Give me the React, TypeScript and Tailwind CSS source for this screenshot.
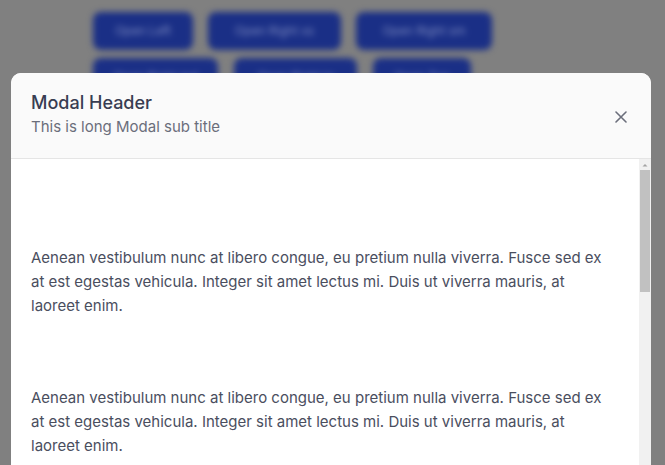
import React from "react";

const para =
  "Aenean vestibulum nunc at libero congue, eu pretium nulla viverra. Fusce sed ex at est egestas vehicula. Integer sit amet lectus mi. Duis ut viverra mauris, at laoreet enim.";

function Btn({ w, label }: { w: string; label: string }) {
  return (
    <div className={`${w} h-[38px] rounded-lg bg-[#1a2f86] text-[#7f8cc0] text-[12px] flex items-center justify-center`}>
      {label}
    </div>
  );
}

export default function App() {
  return (
    <div className="relative w-[665px] h-[465px] overflow-hidden bg-[#808080] font-['Inter',sans-serif]">
      <div className="blur-[3px] pt-[12px] pl-[93px] flex flex-col gap-[8px]">
        <div className="flex gap-[15px]">
          <Btn w="w-[100px]" label="Open Left" />
          <Btn w="w-[133px]" label="Open Right xs" />
          <Btn w="w-[136px]" label="Open Right sm" />
        </div>
        <div className="flex gap-[16px]">
          <Btn w="w-[125px]" label="Open Right md" />
          <Btn w="w-[123px]" label="Open Right lg" />
          <Btn w="w-[98px]" label="Open Top" />
        </div>
      </div>

      <div className="absolute left-[11px] top-[73px] w-[640px] h-[420px] rounded-t-[10px] bg-white overflow-hidden flex flex-col">
        <div className="h-[86px] shrink-0 bg-[#fafafa] border-b border-[#e5e5e5] flex items-center justify-between pl-[20px] pr-[24px]">
          <div className="flex flex-col">
            <div className="text-[18px] leading-[26px] font-medium text-[#383d52] mt-[-4px]">Modal Header</div>
            <div className="text-[15px] leading-[22px] text-[#6b6e7b]">This is long Modal sub title</div>
          </div>
          <svg width="12" height="12" viewBox="0 0 12 12" className="mt-[2px]">
            <path d="M1 1 L11 11 M11 1 L1 11" stroke="#6b6e7b" strokeWidth="1.6" strokeLinecap="round" />
          </svg>
        </div>
        <div className="flex flex-1 min-h-0">
          <div className="flex-1 pl-[20px] pr-[30px] pt-[87px] text-[15px] leading-[24px] text-[#4a4e5e] flex flex-col gap-[68px]">
            <p>{para}</p>
            <p>{para}</p>
          </div>
          <div className="w-[12px] bg-[#f1f1f1] flex flex-col items-center">
            <svg width="8" height="8" viewBox="0 0 8 8" className="mt-[2px]">
              <path d="M1.5 5.5 L4 3 L6.5 5.5 Z" fill="#a3a3a3" />
            </svg>
            <div className="w-[10px] h-[122px] bg-[#c1c1c1] mt-[1px]" />
          </div>
        </div>
      </div>
    </div>
  );
}
